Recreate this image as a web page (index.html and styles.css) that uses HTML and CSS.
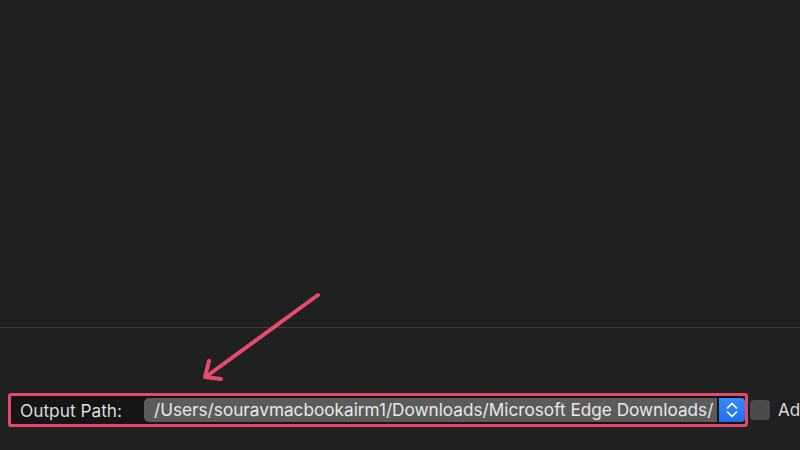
FILE: index.html
```html
<!DOCTYPE html>
<html>
<head>
<meta charset="utf-8">
<link rel="stylesheet" href="styles.css">
</head>
<body>
<div class="window">
  <div class="top"></div>
  <div class="divider"></div>
  <div class="bottom">
    <div class="row">
      <div class="highlight">
        <span class="label">Output Path:</span>
        <div class="field">/Users/souravmacbookairm1/Downloads/Microsoft Edge Downloads/</div>
        <div class="stepper">
          <svg width="14" height="20" viewBox="0 0 14 20"><path d="M2.5 8 L7 3.5 L11.5 8 M2.5 12 L7 16.5 L11.5 12" fill="none" stroke="#fff" stroke-width="1.7" stroke-linecap="round" stroke-linejoin="round"/></svg>
        </div>
      </div>
      <div class="checkbox"></div>
      <span class="check-label">Ad</span>
    </div>
  </div>
  <svg class="arrow" width="800" height="450" viewBox="0 0 800 450">
    <g fill="none" stroke="#e84a6c" stroke-width="4" stroke-linecap="round" stroke-linejoin="round">
      <path d="M318 295 L207 376"/>
      <path d="M209 361 L205 377 L221 379"/>
    </g>
  </svg>
</div>
</body>
</html>
```
FILE: styles.css
```css
html, body {
  margin: 0;
  padding: 0;
  background: #1f2020;
}
.window {
  position: relative;
  width: 800px;
  height: 450px;
  overflow: hidden;
  font-family: Inter, "Liberation Sans", Arial, sans-serif;
}
.top {
  height: 327px;
}
.divider {
  height: 1px;
  background: #3a3b3b;
}
.bottom {
  padding-top: 65px;
}
.row {
  display: flex;
  align-items: center;
  padding-left: 8px;
}
.highlight {
  display: flex;
  align-items: center;
  width: 737px;
  height: 28px;
  border: 3px solid #e4486b;
  border-radius: 3px;
  background: #151515;
  box-sizing: content-box;
}
.label {
  color: #dcdcdc;
  font-size: 17.3px;
  padding-left: 9px;
  width: 124px;
  flex: none;
  padding-top: 1px;
}
.field {
  width: 563px;
  height: 24px;
  background: #5b5b5b;
  border-radius: 5px 0 0 5px;
  color: #e8e8e8;
  font-size: 17.2px;
  line-height: 24px;
  padding-left: 10px;
  white-space: nowrap;
  overflow: hidden;
  flex: none;
}
.stepper {
  width: 26px;
  height: 24px;
  margin-left: 2px;
  background: linear-gradient(#3b8af8, #1f6ef0);
  border-radius: 0 4px 4px 0;
  display: flex;
  align-items: center;
  justify-content: center;
  flex: none;
}
.checkbox {
  width: 20px;
  height: 20px;
  margin-left: 2px;
  background: #4b4b4b;
  border-radius: 4px;
  flex: none;
}
.check-label {
  color: #dcdcdc;
  font-size: 17px;
  margin-left: 8px;
  white-space: nowrap;
}
.arrow {
  position: absolute;
  left: 0;
  top: 0;
}
```
